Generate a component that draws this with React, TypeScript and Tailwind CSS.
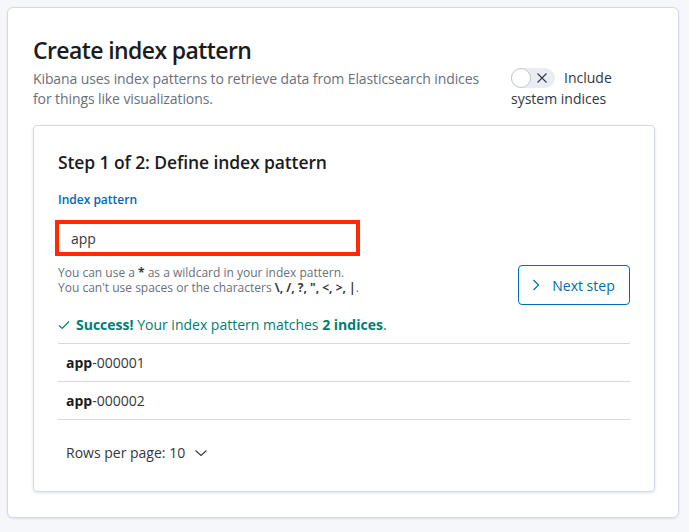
import React from "react";

export default function App() {
  return (
    <div
      className="w-[689px] h-[532px] bg-[#f5f7fa] pt-[7px] pl-[7px]"
      style={{ fontFamily: '"Open Sans", sans-serif' }}
    >
      <div className="w-[672px] h-[511px] bg-white border border-[#d3dae6] rounded-[6px] shadow-[0_1px_2px_rgba(152,162,179,0.25)] pl-[25px] pr-[24px] pt-[26px]">
        <div className="flex justify-between">
          <div>
            <h1 className="text-[23px] leading-[32px] text-[#1a1c21] font-semibold tracking-[-0.6px]">
              Create index pattern
            </h1>
            <p className="mt-[3px] text-[14px] leading-[20px] text-[#69707d] w-[460px] tracking-[-0.1px]">
              Kibana uses index patterns to retrieve data from Elasticsearch indices for things like visualizations.
            </p>
          </div>
          <div className="w-[110px] mr-[33px] mt-[34px] text-[14px] leading-[20px] text-[#343741]">
            <span className="inline-flex align-middle relative top-[-1px] w-[44px] h-[20px] rounded-full bg-[#e9edf3] mr-[9px]">
              <span className="absolute left-0 top-0 w-[20px] h-[20px] rounded-full bg-white border border-[#c0c6cf]" />
              <svg className="absolute left-[25px] top-[4px]" width="12" height="12" viewBox="0 0 12 12">
                <path d="M1.5 1.5 L10.5 10.5 M10.5 1.5 L1.5 10.5" stroke="#343741" strokeWidth="1.1" fill="none" />
              </svg>
            </span>
            Include system indices
          </div>
        </div>

        <div className="mt-[16px] w-[622px] h-[367px] border border-[#d3dae6] rounded-[4px] shadow-[0_1px_3px_rgba(152,162,179,0.3)] p-[24px]">
          <h2 className="text-[17.5px] leading-[24px] font-semibold text-[#1a1c21] tracking-[-0.1px]">
            Step 1 of 2: Define index pattern
          </h2>
          <div className="flex justify-between mt-[18px]">
            <div>
              <div className="text-[12px] leading-[16px] font-semibold text-[#006bb4]">Index pattern</div>
              <div className="mt-[12px] ml-[-3px] w-[305px] h-[36px] border-[4px] border-[#ff2a00] bg-white flex items-center pl-[12px] text-[14px] text-[#343741]">
                app
              </div>
              <div className="mt-[9px] text-[12px] leading-[15px] text-[#69707d]">
                <p>You can use a <b className="text-[#343741]">*</b> as a wildcard in your index pattern.</p>
                <p>
                  You can't use spaces or the characters <b className="text-[#343741]">\, /, ?, ", &lt;, &gt;, |</b>.
                </p>
              </div>
            </div>
            <button className="mt-[73px] w-[112px] h-[40px] border border-[#006bb4] rounded-[4px] text-[#006bb4] text-[14px] flex items-center justify-center gap-[11px] pr-[2px]">
              <svg width="10" height="14" viewBox="0 0 10 14">
                <path d="M2.5 2 L7.5 7 L2.5 12" stroke="#006bb4" strokeWidth="1.2" fill="none" />
              </svg>
              Next step
            </button>
          </div>

          <div className="mt-[10px] flex items-center text-[14px] leading-[20px] text-[#017d73]">
            <svg width="12" height="12" viewBox="0 0 12 12" className="mr-[6px]">
              <path d="M1 6.5 L4.2 9.5 L11 2.5" stroke="#017d73" strokeWidth="1.1" fill="none" />
            </svg>
            <span className="font-bold">Success!</span>
            <span>&nbsp;Your index pattern matches&nbsp;</span>
            <span className="font-bold">2 indices</span>
            <span>.</span>
          </div>
          <div className="mt-[8px] border-t border-[#d3dae6]">
            <div className="h-[38px] flex items-center pl-[8px] text-[14px] text-[#343741] border-b border-[#d3dae6]">
              <b className="text-[#1a1c21]">app</b>-000001
            </div>
            <div className="h-[38px] flex items-center pl-[8px] text-[14px] text-[#343741] border-b border-[#d3dae6]">
              <b className="text-[#1a1c21]">app</b>-000002
            </div>
          </div>
          <div className="mt-[23px] ml-[8px] flex items-center text-[14px] leading-[20px] text-[#343741]">
            Rows per page: 10
            <svg width="14" height="10" viewBox="0 0 14 10" className="ml-[9px]">
              <path d="M1.5 2.5 L7 7.5 L12.5 2.5" stroke="#343741" strokeWidth="1.1" fill="none" />
            </svg>
          </div>
        </div>
      </div>
    </div>
  );
}
